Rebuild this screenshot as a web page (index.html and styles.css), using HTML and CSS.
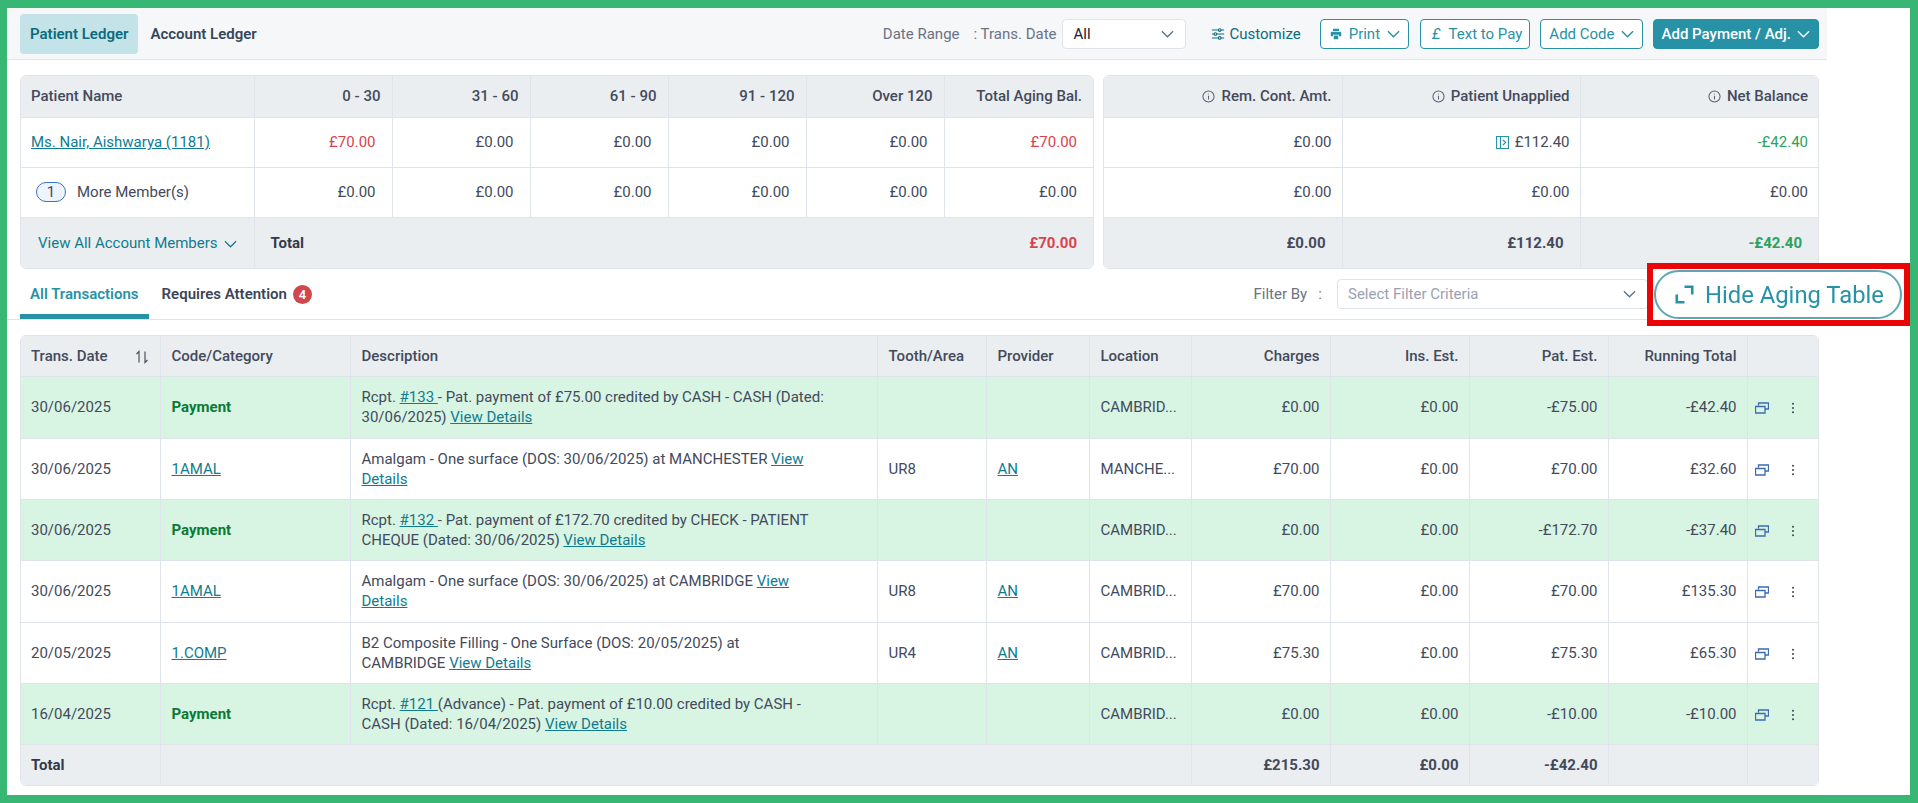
FILE: index.html
```html
<!DOCTYPE html>
<html lang="en">
  <head>
    <meta charset="UTF-8" />
    <title>Ledger</title>
    <link rel="stylesheet" href="styles.css">
  </head>

  <body>
    <div class="page">
      <!-- toolbar -->
      <div class="toolbar">
        <a class="ledger-tab active">Patient Ledger</a>
        <a class="ledger-tab">Account Ledger</a>
        <div class="toolbar-right">
          <span class="date-label">Date Range</span>
          <span class="date-label date-trans">: Trans. Date</span>
          <div class="select date-select">
            <span>All</span>
            <svg class="chev" viewBox="0 0 14 8"><path d="M1 1l6 6 6-6" /></svg>
          </div>
          <a class="customize">
            <svg class="ico" viewBox="0 0 16 16"><path d="M1 3.500h7.500M11.500 3.500H15M1 8h2.500M6.500 8H15M1 12.500h7.500M11.500 12.500H15" /><circle cx="10" cy="3.500" r="1.500" /><circle cx="5" cy="8" r="1.500" /><circle cx="10" cy="12.500" r="1.500" /></svg>
            Customize
          </a>
          <a class="btn print">
            <svg class="ico fill" viewBox="0 0 16 16"><path d="M4 1h8v3H4zM2.500 5h11A1.500 1.500 0 0 1 15 6.500V11h-3V9H4v2H1V6.500A1.500 1.500 0 0 1 2.500 5zM5 10h6v5H5z" /></svg>
            Print
            <svg class="chev" viewBox="0 0 14 8"><path d="M1 1l6 6 6-6" /></svg>
          </a>
          <a class="btn text-pay"><i>£</i> Text to Pay</a>
          <a class="btn">Add Code <svg class="chev" viewBox="0 0 14 8"><path d="M1 1l6 6 6-6" /></svg></a>
          <a class="btn primary">Add Payment / Adj. <svg class="chev" viewBox="0 0 14 8"><path d="M1 1l6 6 6-6" /></svg></a>
        </div>
      </div>

      <!-- aging tables -->
      <div class="aging">
        <div class="table-wrap aging-left">
          <table>
            <colgroup>
              <col class="a-name" /><col class="a-num" /><col class="a-num" /><col class="a-num" /><col class="a-num" /><col class="a-num" /><col />
            </colgroup>
            <tr class="head h41">
              <th>Patient Name</th>
              <th class="num">0 - 30</th>
              <th class="num">31 - 60</th>
              <th class="num">61 - 90</th>
              <th class="num">91 - 120</th>
              <th class="num">Over 120</th>
              <th class="num">Total Aging Bal.</th>
            </tr>
            <tr class="h50">
              <td><a class="link">Ms. Nair, Aishwarya (1181)</a></td>
              <td class="val red">£70.00</td>
              <td class="val">£0.00</td>
              <td class="val">£0.00</td>
              <td class="val">£0.00</td>
              <td class="val">£0.00</td>
              <td class="val red">£70.00</td>
            </tr>
            <tr class="h50">
              <td class="members"><span class="count">1</span>More Member(s)</td>
              <td class="val">£0.00</td>
              <td class="val">£0.00</td>
              <td class="val">£0.00</td>
              <td class="val">£0.00</td>
              <td class="val">£0.00</td>
              <td class="val">£0.00</td>
            </tr>
            <tr class="foot h51">
              <td class="view-all">View All Account Members <svg class="chev" viewBox="0 0 14 8"><path d="M1 1l6 6 6-6" /></svg></td>
              <td colspan="5" class="total-label no-line">Total</td>
              <td class="val red no-line">£70.00</td>
            </tr>
          </table>
        </div>
        <div class="table-wrap aging-right">
          <table>
            <colgroup><col class="r-1" /><col class="r-2" /><col /></colgroup>
            <tr class="head h41">
              <th class="num"><svg class="info" viewBox="0 0 14 14"><circle cx="7" cy="7" r="6" /><path d="M7 6.200v4M6.300 4.200h.9" /></svg>Rem. Cont. Amt.</th>
              <th class="num"><svg class="info" viewBox="0 0 14 14"><circle cx="7" cy="7" r="6" /><path d="M7 6.200v4M6.300 4.200h.9" /></svg>Patient Unapplied</th>
              <th class="num"><svg class="info" viewBox="0 0 14 14"><circle cx="7" cy="7" r="6" /><path d="M7 6.200v4M6.300 4.200h.9" /></svg>Net Balance</th>
            </tr>
            <tr class="h50">
              <td class="num">£0.00</td>
              <td class="num"><svg class="unapplied" viewBox="0 0 13 13"><path d="M.5.500h12v12H.5zM4.500.500v12M7 4l2.500 2.500L7 9" /></svg>£112.40</td>
              <td class="num green">-£42.40</td>
            </tr>
            <tr class="h50">
              <td class="num">£0.00</td>
              <td class="num">£0.00</td>
              <td class="num">£0.00</td>
            </tr>
            <tr class="foot h51">
              <td class="val">£0.00</td>
              <td class="val">£112.40</td>
              <td class="val green">-£42.40</td>
            </tr>
          </table>
        </div>
      </div>

      <!-- transaction tabs -->
      <div class="trans-tabs">
        <a class="trans-tab active">All Transactions</a>
        <a class="trans-tab">Requires Attention <span class="badge">4</span></a>
        <div class="filter">
          <span class="filter-label">Filter By&nbsp;&nbsp;&nbsp;:</span>
          <div class="select filter-select">
            <span>Select Filter Criteria</span>
            <svg class="chev" viewBox="0 0 14 8"><path d="M1 1l6 6 6-6" /></svg>
          </div>
        </div>
        <!-- highlighted button sits over the row -->
        <div class="highlight">
          <a class="hide-aging">
            <svg viewBox="0 0 16 16"><path d="M1.500 8v6.500H8M8 1.500h6.500V8" /></svg>
            Hide Aging Table
          </a>
        </div>
      </div>

      <!-- transactions -->
      <div class="table-wrap trans">
        <table>
          <colgroup>
            <col class="t-date" /><col class="t-code" /><col class="t-desc" /><col class="t-tooth" /><col class="t-prov" /><col class="t-loc" /><col class="t-money" /><col class="t-money" /><col class="t-money" /><col class="t-money" /><col />
          </colgroup>
          <tr class="head h40">
            <th class="sort-cell">Trans. Date<svg class="sort" viewBox="0 0 14 14"><path d="M4 12.500V1.500L1.500 4M10 1.500v11l2.500-2.500" /></svg></th>
            <th>Code/Category</th>
            <th>Description</th>
            <th>Tooth/Area</th>
            <th>Provider</th>
            <th>Location</th>
            <th class="num">Charges</th>
            <th class="num">Ins. Est.</th>
            <th class="num">Pat. Est.</th>
            <th class="num">Running Total</th>
            <th></th>
          </tr>
          <tr class="pay h62">
            <td>30/06/2025</td>
            <td class="pay-code">Payment</td>
            <td class="desc">Rcpt. <a class="link">#133 </a>- Pat. payment of £75.00 credited by CASH - CASH (Dated: 30/06/2025) <a class="link">View Details</a></td>
            <td></td>
            <td></td>
            <td>CAMBRID...</td>
            <td class="num">£0.00</td>
            <td class="num">£0.00</td>
            <td class="num">-£75.00</td>
            <td class="num">-£42.40</td>
            <td class="actions"><svg class="win" viewBox="0 0 14 12"><path d="M3.500 3.500V1h10v6h-3.500M.5 4.500h9.500v6.500H.5z" /></svg><svg class="kebab" viewBox="0 0 4 14"><circle cx="2" cy="2" r="1.200" /><circle cx="2" cy="7" r="1.200" /><circle cx="2" cy="12" r="1.200" /></svg></td>
          </tr>
          <tr class="h61">
            <td>30/06/2025</td>
            <td><a class="link">1AMAL</a></td>
            <td class="desc">Amalgam - One surface (DOS: 30/06/2025) at MANCHESTER <a class="link">View Details</a></td>
            <td>UR8</td>
            <td><a class="link">AN</a></td>
            <td>MANCHE...</td>
            <td class="num">£70.00</td>
            <td class="num">£0.00</td>
            <td class="num">£70.00</td>
            <td class="num">£32.60</td>
            <td class="actions"><svg class="win" viewBox="0 0 14 12"><path d="M3.500 3.500V1h10v6h-3.500M.5 4.500h9.500v6.500H.5z" /></svg><svg class="kebab" viewBox="0 0 4 14"><circle cx="2" cy="2" r="1.200" /><circle cx="2" cy="7" r="1.200" /><circle cx="2" cy="12" r="1.200" /></svg></td>
          </tr>
          <tr class="pay h61">
            <td>30/06/2025</td>
            <td class="pay-code">Payment</td>
            <td class="desc">Rcpt. <a class="link">#132 </a>- Pat. payment of £172.70 credited by CHECK - PATIENT CHEQUE (Dated: 30/06/2025) <a class="link">View Details</a></td>
            <td></td>
            <td></td>
            <td>CAMBRID...</td>
            <td class="num">£0.00</td>
            <td class="num">£0.00</td>
            <td class="num">-£172.70</td>
            <td class="num">-£37.40</td>
            <td class="actions"><svg class="win" viewBox="0 0 14 12"><path d="M3.500 3.500V1h10v6h-3.500M.5 4.500h9.500v6.500H.5z" /></svg><svg class="kebab" viewBox="0 0 4 14"><circle cx="2" cy="2" r="1.200" /><circle cx="2" cy="7" r="1.200" /><circle cx="2" cy="12" r="1.200" /></svg></td>
          </tr>
          <tr class="h62">
            <td>30/06/2025</td>
            <td><a class="link">1AMAL</a></td>
            <td class="desc">Amalgam - One surface (DOS: 30/06/2025) at CAMBRIDGE <a class="link">View Details</a></td>
            <td>UR8</td>
            <td><a class="link">AN</a></td>
            <td>CAMBRID...</td>
            <td class="num">£70.00</td>
            <td class="num">£0.00</td>
            <td class="num">£70.00</td>
            <td class="num">£135.30</td>
            <td class="actions"><svg class="win" viewBox="0 0 14 12"><path d="M3.500 3.500V1h10v6h-3.500M.5 4.500h9.500v6.500H.5z" /></svg><svg class="kebab" viewBox="0 0 4 14"><circle cx="2" cy="2" r="1.200" /><circle cx="2" cy="7" r="1.200" /><circle cx="2" cy="12" r="1.200" /></svg></td>
          </tr>
          <tr class="h61">
            <td>20/05/2025</td>
            <td><a class="link">1.COMP</a></td>
            <td class="desc">B2 Composite Filling - One Surface (DOS: 20/05/2025) at CAMBRIDGE <a class="link">View Details</a></td>
            <td>UR4</td>
            <td><a class="link">AN</a></td>
            <td>CAMBRID...</td>
            <td class="num">£75.30</td>
            <td class="num">£0.00</td>
            <td class="num">£75.30</td>
            <td class="num">£65.30</td>
            <td class="actions"><svg class="win" viewBox="0 0 14 12"><path d="M3.500 3.500V1h10v6h-3.500M.5 4.500h9.500v6.500H.5z" /></svg><svg class="kebab" viewBox="0 0 4 14"><circle cx="2" cy="2" r="1.200" /><circle cx="2" cy="7" r="1.200" /><circle cx="2" cy="12" r="1.200" /></svg></td>
          </tr>
          <tr class="pay h61">
            <td>16/04/2025</td>
            <td class="pay-code">Payment</td>
            <td class="desc">Rcpt. <a class="link">#121 </a>(Advance) - Pat. payment of £10.00 credited by CASH - CASH (Dated: 16/04/2025) <a class="link">View Details</a></td>
            <td></td>
            <td></td>
            <td>CAMBRID...</td>
            <td class="num">£0.00</td>
            <td class="num">£0.00</td>
            <td class="num">-£10.00</td>
            <td class="num">-£10.00</td>
            <td class="actions"><svg class="win" viewBox="0 0 14 12"><path d="M3.500 3.500V1h10v6h-3.500M.5 4.500h9.500v6.500H.5z" /></svg><svg class="kebab" viewBox="0 0 4 14"><circle cx="2" cy="2" r="1.200" /><circle cx="2" cy="7" r="1.200" /><circle cx="2" cy="12" r="1.200" /></svg></td>
          </tr>
          <tr class="foot h41">
            <td class="total-label">Total</td>
            <td colspan="5"></td>
            <td class="num strong">£215.30</td>
            <td class="num strong">£0.00</td>
            <td class="num strong">-£42.40</td>
            <td></td>
            <td></td>
          </tr>
        </table>
      </div>
    </div>
  </body>
</html>
```

FILE: styles.css
```css
* {
  margin: 0;
  padding: 0;
  box-sizing: border-box;
}

html,
body {
  height: 803px;
  overflow: hidden;
}

body {
  border: solid #38b673;
  border-width: 8px 8px 8px 7px;
  background: #fff;
  font-family: Roboto, "Liberation Sans", sans-serif;
  font-size: 15px;
  color: #434a5c;
}

.page {
  width: 1820px;
}

/* toolbar */
.toolbar {
  display: flex;
  align-items: center;
  height: 52px;
  padding: 6px 8px 6px 13px;
  background: #f6f7f9;
  border-bottom: 1px solid #dfe3ea;
}

.ledger-tab {
  height: 40px;
  line-height: 40px;
  padding: 0 10px;
  border-radius: 4px;
  font-weight: 600;
  color: #33475a;
  margin-right: 2px;
}

.ledger-tab.active {
  background: #c4e3e8;
  color: #0b6b7e;
}

.toolbar-right {
  display: flex;
  align-items: center;
  margin-left: auto;
  white-space: nowrap;
}

.date-label {
  color: #6b7284;
  margin-right: 14px;
}

.date-label.date-trans {
  margin-right: 5px;
}

.select {
  display: flex;
  align-items: center;
  justify-content: space-between;
  height: 30px;
  background: #fff;
  border: 1px solid #dfe3ea;
  border-radius: 4px;
}

.date-select {
  width: 124px;
  padding: 0 11px;
  color: #1b2030;
}

.chev {
  width: 13px;
  height: 8px;
  fill: none;
  stroke: #5b6f80;
  stroke-width: 1.300;
}

.customize {
  display: flex;
  align-items: center;
  gap: 5px;
  color: #0b6b7e;
  margin: 0 19px 0 25px;
}

.ico {
  width: 14px;
  height: 14px;
  fill: none;
  stroke: #0b6b7e;
  stroke-width: 1.200;
}

.ico.fill {
  width: 12px;
  height: 12px;
  fill: #2792a6;
  stroke: none;
}

.btn {
  display: flex;
  align-items: center;
  gap: 6px;
  height: 30px;
  padding: 0 8px;
  margin-left: 10px;
  background: #fff;
  border: 1px solid #2792a6;
  border-radius: 4px;
  color: #2792a6;
}

.btn .chev {
  stroke: #2792a6;
  stroke-width: 1.500;
}

.btn.print {
  margin-left: 0;
  padding-left: 9px;
  gap: 7px;
}

.btn.text-pay {
  margin-left: 11px;
  padding: 0 7px 0 11px;
  gap: 8px;
}

.btn.primary {
  background: #2792a6;
  color: #fff;
  font-weight: 500;
  gap: 6px;
}

.btn.primary .chev {
  stroke: #fff;
}

/* tables */
.table-wrap {
  border: 1px solid #dfe3ea;
  border-radius: 6px;
  overflow: hidden;
}

table {
  width: 100%;
  table-layout: fixed;
  border-collapse: collapse;
}

th,
td {
  padding: 0 11px;
  text-align: left;
  border: 1px solid #dfe3ea;
}

th:first-child,
td:first-child {
  padding-left: 10px;
}

tr:first-child th {
  border-top: 0;
}

tr:last-child td {
  border-bottom: 0;
}

tr th:first-child,
tr td:first-child {
  border-left: 0;
}

tr th:last-child,
tr td:last-child {
  border-right: 0;
}

th {
  font-weight: 500;
}

.head,
.foot {
  background: #ebeef1;
}

.h40 {
  height: 40px;
}

.h41 {
  height: 41px;
}

.h50 {
  height: 50px;
}

.h51 {
  height: 51px;
}

.h61 {
  height: 61px;
}

.h62 {
  height: 62px;
}

.num {
  text-align: right;
}

.val {
  text-align: right;
  padding-right: 16px;
}

.foot .val {
  font-weight: 700;
}

.red {
  color: #d9434e;
}

.green {
  color: #2ba35d;
}

.link {
  color: #0f7c8f;
  text-decoration: underline;
}

/* aging */
.aging {
  display: flex;
  justify-content: space-between;
  padding: 15px 8px 0 13px;
}

.aging-left {
  width: 1074px;
}

.aging-right {
  width: 716px;
}

.aging-right .num,
.trans .num {
  padding-right: 10px;
}

.a-name {
  width: 233px;
}

.a-num {
  width: 138px;
}

.r-1 {
  width: 238px;
}

.r-2 {
  width: 238px;
}

.count {
  display: inline-block;
  width: 30px;
  height: 20px;
  line-height: 18px;
  margin: 0 11px 0 5px;
  text-align: center;
  background: #eef4fd;
  border: 1px solid #3c72c4;
  border-radius: 10px;
}

.aging-left .view-all {
  color: #0f7c8f;
  padding-left: 17px;
  white-space: nowrap;
}

.view-all .chev {
  margin-left: 3px;
  stroke: #0f7c8f;
}

.total-label {
  font-weight: 700;
  color: #33394a;
}

.aging-left .total-label {
  padding-left: 16px;
}

.aging-left .no-line {
  border-left: 0;
  border-right: 0;
}

.aging-left .view-all + .no-line {
  border-left: 1px solid #dfe3ea;
}

.info {
  width: 13px;
  height: 13px;
  margin-right: 6px;
  vertical-align: -2px;
  fill: none;
  stroke: #5a6070;
  stroke-width: 1.100;
}

.unapplied {
  width: 13px;
  height: 13px;
  margin-right: 6px;
  vertical-align: -2px;
  fill: none;
  stroke: #2792a6;
  stroke-width: 1.200;
}

/* transaction tabs */
.trans-tabs {
  position: relative;
  display: flex;
  align-items: stretch;
  height: 51px;
  padding-left: 13px;
  border-bottom: 1px solid #dfe3ea;
}

.trans-tab {
  display: flex;
  align-items: center;
  gap: 6px;
  padding: 5px 10px 0;
  margin-right: 3px;
  font-weight: 600;
  color: #3d4456;
  border-bottom: 5px solid transparent;
}

.trans-tab.active {
  color: #2792a6;
  border-bottom-color: #2792a6;
}

.badge {
  display: inline-block;
  width: 19px;
  height: 19px;
  line-height: 19px;
  text-align: center;
  background: #d1474c;
  color: #fff;
  border-radius: 50%;
  font-size: 13px;
}

.filter {
  display: flex;
  align-items: center;
  gap: 15px;
  margin-left: auto;
  margin-right: 179px;
  padding-bottom: 1px;
}

.filter-label {
  color: #6b7284;
}

.filter-select {
  width: 311px;
  padding: 0 11px 0 10px;
  color: #9aa2b1;
}

.highlight {
  position: absolute;
  left: 1640px;
  top: -6px;
  width: 263px;
  height: 63px;
  padding: 1px 2px 0 1px;
  border: 6px solid #ea0606;
  background: #fff;
}

.hide-aging {
  display: flex;
  align-items: center;
  gap: 11px;
  height: 49px;
  width: 248px;
  padding-left: 19px;
  border: 2px solid #5ba9b6;
  border-radius: 25px;
  color: #2792a6;
  font-size: 23.800px;
  filter: blur(0.4px);
}

.hide-aging svg {
  width: 19px;
  height: 19px;
  fill: none;
  stroke: #2792a6;
  stroke-width: 2.200;
}

/* transactions */
.trans {
  margin: 15px 8px 0 13px;
}

.t-date {
  width: 139px;
}

.t-code {
  width: 190px;
}

.t-desc {
  width: 527px;
}

.t-tooth {
  width: 109px;
}

.t-prov {
  width: 103px;
}

.t-loc {
  width: 102px;
}

.t-money {
  width: 139px;
}

.sort-cell {
  position: relative;
}

.sort {
  position: absolute;
  right: 11px;
  top: 14px;
  width: 14px;
  height: 14px;
  fill: none;
  stroke: #4a5060;
  stroke-width: 1.200;
}

.pay {
  background: #d8f5e3;
}

.pay-code {
  font-weight: 700;
  color: #0a7a36;
}

.desc {
  line-height: 20px;
  padding-right: 52px;
}

.strong {
  font-weight: 700;
}

.actions {
  padding-left: 7px;
}

.win {
  width: 14px;
  height: 12px;
  fill: none;
  stroke: #3c6bb0;
  stroke-width: 1.300;
  vertical-align: middle;
}

.kebab {
  width: 4px;
  height: 12px;
  margin-left: 22px;
  fill: #3d4456;
  vertical-align: middle;
}
```
